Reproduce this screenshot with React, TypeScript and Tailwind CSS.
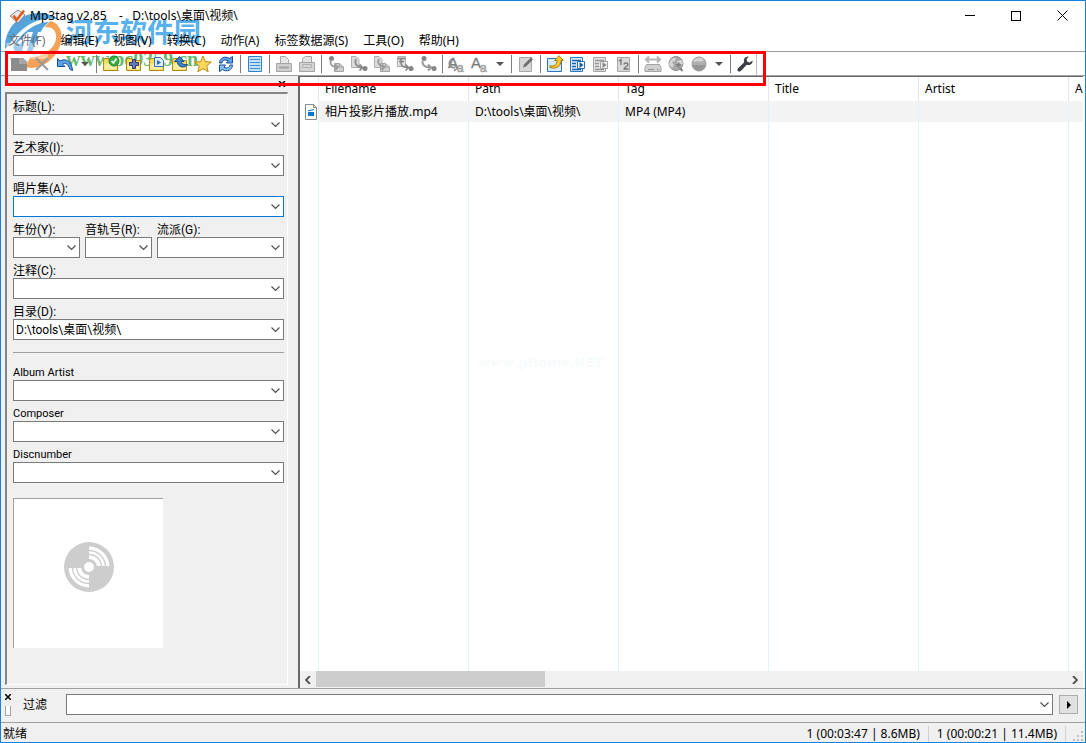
import React from "react";

type IconProps = { children: React.ReactNode };

function Glyph({ children }: IconProps) {
  return (
    <svg viewBox="0 0 18 18" className="h-[18px] w-[18px] shrink-0 overflow-visible" fill="none" aria-hidden="true">
      {children}
    </svg>
  );
}

function FolderBase() {
  return (
    <>
      <path d="M1.5 5.5V15.5H15.5V5.5H8L6.5 3.5H2.5Z" fill="#f3d95c" stroke="#b08a14" />
      <path d="M2.5 8.5H14.5V14.5H2.5Z" fill="#fbeea0" />
    </>
  );
}

const TagNote = () => (
  <>
    <path d="M7.500 8.500h5l4 3.500v4.500h-9z" fill="#d0d0d0" stroke="#a3a3a3" />
    <path d="M12.500 8.500v3.500h4" stroke="#a3a3a3" />
  </>
);

const PaperNote = () => <path d="M1.500 1.500h4.500l3 3v8h-7.500z" fill="#dcdcdc" stroke="#adadad" />;

const BigLetters = () => (
  <>
    <text x="0" y="13" fontSize="15" fontFamily="Liberation Sans" fill="#7d7d7d" stroke="#777" strokeWidth="0.3">A</text>
    <text x="9" y="17" fontSize="12" fontFamily="Liberation Sans" fill="#cfcfcf" stroke="#999" strokeWidth="0.6">a</text>
  </>
);

const icons: Record<string, React.ReactNode> = {
  save: (
    <>
      <path d="M1 3H13L17 7V16H1Z" fill="#8c8c8c" />
      <path d="M9 3h4l4 4v2H9z" fill="#a6a6a6" />
    </>
  ),
  remove: <path d="M3 3l12 12M15 3L3 15" stroke="#9a9a9a" strokeWidth="2" />,
  undo: (
    <path d="M1.5 3.5V11.5H9L6.5 9C9 7.5 12 8.5 14 14.5L16.5 15.5C16 7 10 2.5 4 6Z" fill="#5aa3e6" stroke="#174f9c" />
  ),
  folderCheck: (
    <>
      <FolderBase />
      <circle cx="12" cy="6" r="5" fill="#36b044" stroke="#1b7f2b" />
      <path d="M9.5 6l2 2 3-4.500" stroke="#fff" strokeWidth="1.6" />
    </>
  ),
  folderAdd: (
    <>
      <FolderBase />
      <path d="M7.500 4.500h3v3h3v3h-3v3h-3v-3h-3v-3h3z" fill="#6b78b8" stroke="#2c3672" />
    </>
  ),
  folderPlay: (
    <>
      <FolderBase />
      <path d="M6.500 2.500h6l3 3v6h-9z" fill="#dcecff" stroke="#3674b8" />
      <path d="M9 5v5l4-2.500z" fill="#256ab3" />
    </>
  ),
  folderUp: (
    <>
      <FolderBase />
      <path d="M3.500 6.500L8.500 1.500l4.500 5h-2.500c0 2.500 2 3.500 6 3-1.500 3.500-10 4-10-3z" fill="#3c82cc" stroke="#174a8c" />
    </>
  ),
  star: <path d="M9 1l2.300 5.600 6 .4-4.600 3.900 1.500 5.900L9 13.600 3.800 16.800l1.500-5.900L.7 7l6-.4z" fill="#fbd75b" stroke="#bd8c12" />,
  refresh: (
    <>
      <path d="M2.500 8C2.500 3 8 .500 12.500 3.500L15.500 1.500V8H9.500L11 5.800C8.500 4.200 5.500 5 5 8Z" fill="#5da2e3" stroke="#174f9c" />
      <path d="M15.500 10C15.500 15 10 17.500 5.500 14.500L2.500 16.500V10H8.500L7 12.200C9.500 13.800 12.500 13 13 10Z" fill="#8cc2f2" stroke="#174f9c" />
    </>
  ),
  list: (
    <>
      <path d="M2.500 1.500h13v15h-13z" fill="#c4e2fc" stroke="#2f7fca" />
      <path d="M4 4.500h10M4 7.500h10M4 10.500h10M4 13.500h10" stroke="#3c8bd6" />
    </>
  ),
  printA: (
    <>
      <path d="M5.500 9V1.500h5l3 3V9" fill="#e7e7e7" stroke="#a8a8a8" />
      <path d="M1.500 8.500h15v8h-15z" fill="#cfcfcf" stroke="#a4a4a4" />
      <path d="M4 12.500h10" stroke="#a3a3a3" strokeWidth="2" />
    </>
  ),
  printB: (
    <>
      <path d="M4.500 9V3.500l3-2h6V9" fill="#e3e3e3" stroke="#a4a4a4" />
      <path d="M1.500 7.500h15v9h-15z" fill="#d4d4d4" stroke="#a4a4a4" />
      <path d="M4.500 9.500h9v3h-9z" stroke="#b0b0b0" />
    </>
  ),
  fileToTag: (
    <>
      <TagNote />
      <circle cx="4.500" cy="3.500" r="2.500" fill="#858585" />
      <path d="M3.500 6c-.5 4 2 6 7 6M8 9.500l3 2.500-3 3" stroke="#9a9a9a" strokeWidth="1.800" />
    </>
  ),
  tagToFile: (
    <>
      <PaperNote />
      <path d="M6 4c-2 5 1 8 6 8.500M9.500 9.500l3 3-3 3" stroke="#8c8c8c" strokeWidth="1.800" />
      <circle cx="15" cy="13.500" r="2.500" fill="#858585" />
    </>
  ),
  tagToTag: (
    <>
      <PaperNote />
      <TagNote />
      <path d="M6 4c-2 4 0 7 5 8M8.500 9.500l3 2.500-3 3" stroke="#9a9a9a" strokeWidth="1.800" />
    </>
  ),
  textToFile: (
    <>
      <path d="M1.500 1.500h8v10h-8z" fill="#dedede" stroke="#b0b0b0" />
      <path d="M2 3.500h7M3 6.500h5M5 3v5c0 3 3 4.500 7 4.500M9.500 9.500l3 3-3 3" stroke="#828282" strokeWidth="1.500" />
      <circle cx="15" cy="13.500" r="2.500" fill="#858585" />
    </>
  ),
  fileToFile: (
    <>
      <circle cx="5" cy="3.500" r="2.500" fill="#858585" />
      <path d="M3.500 6c-.5 4 2 6.500 8 6.500M9 9.500l3 3-3 3" stroke="#9c9c9c" strokeWidth="2.200" />
      <circle cx="15" cy="13.500" r="2.500" fill="#858585" />
    </>
  ),
  actionsQuick: (
    <>
      <BigLetters />
      <path d="M4 4c-4 3-4 8 3 9M6 10l3.500 3L6 16" stroke="#8c8c8c" strokeWidth="1.600" />
    </>
  ),
  actions: <BigLetters />,
  edit: (
    <>
      <path d="M2.500 2.500h12v14h-12z" fill="#d6d6d6" stroke="#a8a8a8" />
      <path d="M6 12.500l1-3L14 2.500l2 2-7 7z" fill="#6f6f6f" />
    </>
  ),
  export: (
    <>
      <path d="M1.500 3.500h14v13h-14z" fill="#d6eaff" stroke="#2f74b8" />
      <path d="M4 10.500c4 1.500 7-.5 7-5H8.500L13 .700 17.300 5.500H15c0 6-5 9-11 7z" fill="#fac92e" stroke="#a97b0c" />
    </>
  ),
  playlist: (
    <>
      <path d="M1.500 2.500h12v14h-12z" fill="#d9edff" stroke="#2b78c4" />
      <path d="M3 5.500h9M3 8.500h4M3 11.500h4M3 14.500h9" stroke="#2164aa" strokeWidth="1.500" />
      <path d="M8.500 6.500h7v7h-7z" fill="#f3faff" stroke="#2b6fb5" />
      <path d="M10.500 7v6l4-3z" fill="#1d5ca3" />
    </>
  ),
  playlistGray: (
    <>
      <path d="M1.500 2.500h12v14h-12z" fill="#e2e2e2" stroke="#a8a8a8" />
      <path d="M3 5.500h9M3 8.500h4M3 11.500h4M3 14.500h9" stroke="#969696" strokeWidth="1.500" />
      <path d="M8.500 6.500h7v7h-7z" fill="#efefef" stroke="#a0a0a0" />
      <path d="M10.500 7v6l4-3z" fill="#848484" />
    </>
  ),
  number: (
    <>
      <path d="M2.500 2.500h12v14h-12z" fill="#d9d9d9" stroke="#a8a8a8" />
      <path d="M4 6l2-1.500V10M9 9.500c0-2 4-2 4 0 0 1.500-4 2.500-4 4.500h4.500" stroke="#757575" strokeWidth="1.300" />
    </>
  ),
  device: (
    <>
      <path d="M2 4.500h14M5 1.500l-3 3 3 3M13 1.500l3 3-3 3" stroke="#b5b5b5" strokeWidth="2" />
      <path d="M2.500 9.500h13l1.500 3v4H1v-4z" fill="#d0d0d0" stroke="#a3a3a3" />
      <path d="M4 14.500h6M13 14.500h1.500" stroke="#8f8f8f" />
    </>
  ),
  globeSearch: (
    <>
      <circle cx="9" cy="8.500" r="7" fill="#a8a8a8" stroke="#909090" />
      <path d="M3 6c2-3 5-4 6-3l-1 3-3 1 2 3-2 3-3-3zM10 6l5-1 1 3-3 4-3-2z" fill="#d6d6d6" />
      <path d="M9 10h5M11.500 7.500v5M13 13l2.500 3" stroke="#808080" strokeWidth="2" />
    </>
  ),
  globe: (
    <>
      <circle cx="9" cy="9" r="7" fill="#b0b0b0" stroke="#999" />
      <path d="M3 6c3-4 9-4 11-1l-3 2-4-1-2 1z" fill="#d4d4d4" />
      <path d="M3 10h12c0 3-3 5.500-6 5.500S3 13 3 10z" fill="#969696" />
    </>
  ),
  wrench: (
    <path d="M16.500 5.500C17 9 13.500 11 10.800 9.700L4.500 16.200C2.500 17.500.500 15.500 1.800 13.500L8.200 7.200C7 4 9.500 1 12.800 1.500L10.500 4.200 11.300 6.700 13.800 7.500Z" fill="#3b3f45" />
  ),
};

type ToolItem = { kind: "button"; icon: string; label: string } | { kind: "arrow"; label: string } | { kind: "sep" };

const b = (icon: string, label: string): ToolItem => ({ kind: "button", icon, label });
const sep: ToolItem = { kind: "sep" };

const toolbar: ToolItem[] = [
  b("save", "Save tag"), b("remove", "Remove tag"), b("undo", "Undo"), { kind: "arrow", label: "Undo history" }, sep,
  b("folderCheck", "Change directory"), b("folderAdd", "Add directory"), b("folderPlay", "Load playlist"),
  b("folderUp", "Parent directory"), b("star", "Favorite directory"), b("refresh", "Refresh"), sep,
  b("list", "Select all files"), sep,
  b("printA", "Copy tag"), b("printB", "Paste tag"), sep,
  b("fileToTag", "Filename to tag"), b("tagToFile", "Tag to filename"), b("tagToTag", "Tag to tag"),
  b("textToFile", "Text file to tag"), b("fileToFile", "Filename to filename"), sep,
  b("actionsQuick", "Quick actions"), b("actions", "Actions"), { kind: "arrow", label: "Choose action" }, sep,
  b("edit", "Extended tags"), sep,
  b("export", "Export"), b("playlist", "Playlist of all files"), b("playlistGray", "Playlist of selection"),
  b("number", "Auto-numbering wizard"), sep,
  b("device", "Device"), b("globeSearch", "Search web"), b("globe", "Web sources"),
  { kind: "arrow", label: "Choose web source" }, sep,
  b("wrench", "Options"),
];

function Toolbar() {
  return (
    <div role="toolbar" className="flex h-6 items-center border-t border-[#a0a0a0] pl-[6px]">
      {toolbar.map((item, i) => {
        if (item.kind === "sep") {
          return (
            <span key={i} className="flex h-[18px] w-[6px] shrink-0 justify-center">
              <span className="w-px bg-[#7d7d7d]" />
            </span>
          );
        }
        if (item.kind === "arrow") {
          return (
            <button key={i} aria-label={item.label} className="flex h-5 w-[17px] shrink-0 items-center justify-center">
              <svg viewBox="0 0 8 4" className="h-1 w-2" aria-hidden="true">
                <path d="M0 0h8L4 4z" fill="#555" />
              </svg>
            </button>
          );
        }
        return (
          <button key={i} aria-label={item.label} className="flex h-5 w-[23px] shrink-0 items-center justify-center">
            <Glyph>{icons[item.icon]}</Glyph>
          </button>
        );
      })}
      <span className="h-[22px] w-px bg-[#c0c0c0]" />
    </div>
  );
}

function Chevron() {
  return (
    <svg viewBox="0 0 9 6" className="pointer-events-none absolute right-1 top-2 h-[6px] w-[9px]" fill="none" aria-hidden="true">
      <path d="M.5.500l4 4 4-4" stroke="#505050" strokeWidth="1.200" />
    </svg>
  );
}

type FieldProps = { id: string; label: string; value?: string; active?: boolean };

function Field({ id, label, value = "", active = false }: FieldProps) {
  return (
    <div className="min-w-0">
      <label htmlFor={id} className="block h-5 whitespace-nowrap pt-[3px] leading-5">
        {label}
      </label>
      <div className="relative">
        <select
          id={id}
          defaultValue={value}
          className={
            "block h-[21px] w-full appearance-none border bg-white pl-[2px] pr-4 leading-4 outline-none " +
            (active ? "border-[#0078d7]" : "border-[#7a7a7a]")
          }
        >
          <option>{value}</option>
        </select>
        <Chevron />
      </div>
    </div>
  );
}

function Disc() {
  return (
    <svg viewBox="0 0 50 50" className="h-[50px] w-[50px]" fill="none" aria-hidden="true">
      <circle cx="25" cy="25" r="25" fill="#cdcdcd" />
      <path d="M25 4.500A20.500 20.500 0 0 1 45.500 24H32A7 7 0 0 0 25 18Z" fill="#fff" />
      <path d="M25 45.500A20.500 20.500 0 0 1 4.500 26H18A7 7 0 0 0 25 32Z" fill="#fff" />
      <path d="M25 8.500A16.500 16.500 0 0 1 41.500 24M25 12.500A12.500 12.500 0 0 1 37.500 24M25 41.500A16.500 16.500 0 0 1 8.500 26M25 37.500A12.500 12.500 0 0 1 12.500 26" stroke="#cdcdcd" strokeWidth="1.300" />
      <circle cx="25" cy="25" r="6.500" fill="#fff" stroke="#cdcdcd" strokeWidth="3" />
    </svg>
  );
}

function TagPanel() {
  return (
    <aside className="flex w-[297px] shrink-0 flex-col bg-[#f0f0f0] pb-[3px] pl-1 pr-[10px]">
      <div className="flex h-4 items-center gap-1 pl-1">
        <span className="h-[3px] flex-1 border border-[#c8c8c8] bg-white" />
        <button aria-label="Close panel" className="flex h-3 w-3 items-center justify-center">
          <svg viewBox="0 0 8 6" className="h-[6px] w-2" aria-hidden="true">
            <path d="M1 0l6 6M7 0L1 6" stroke="#000" strokeWidth="1.500" />
          </svg>
        </button>
      </div>
      <div className="flex-1 border-2 border-b border-r border-b-white border-l-[#858585] border-r-white border-t-[#858585] pl-[6px] pr-[3px] font-[Roboto,'Noto_Sans_CJK_SC',sans-serif] text-xs">
        <Field id="title" label="标题(L):" />
        <Field id="artist" label="艺术家(I):" />
        <Field id="album" label="唱片集(A):" active />
        <div className="grid grid-cols-[67px_67px_1fr] gap-[5px]">
          <Field id="year" label="年份(Y):" />
          <Field id="track" label="音轨号(R):" />
          <Field id="genre" label="流派(G):" />
        </div>
        <Field id="comment" label="注释(C):" />
        <Field id="directory" label="目录(D):" value="D:\tools\桌面\视频\" />
        <hr className="mb-[7px] mt-3 border-[#a0a0a0]" />
        <div className="text-[11px]">
          <Field id="albumartist" label="Album Artist" />
          <Field id="composer" label="Composer" />
          <Field id="discnumber" label="Discnumber" />
        </div>
        <div className="mt-[15px] flex h-[150px] w-[150px] items-center justify-center border-l border-t border-[#a0a0a0] bg-white pb-[14px]">
          <Disc />
        </div>
      </div>
    </aside>
  );
}

const columns = ["", "Filename", "Path", "Tag", "Title", "Artist", "A"];
const row = ["", "相片投影片播放.mp4", "D:\\tools\\桌面\\视频\\", "MP4 (MP4)", "", "", ""];

function FileIcon() {
  return (
    <svg viewBox="0 0 12 16" className="ml-[5px] h-4 w-3" fill="none" aria-hidden="true">
      <path d="M.5.500h8l3 3v12H.500z" fill="#fff" stroke="#8b8b8b" />
      <path d="M8.500.500v3h3" stroke="#8b8b8b" />
      <path d="M3 8h6v4H3z" fill="#0078d7" />
      <path d="M3 7l6-1.500" stroke="#0078d7" strokeWidth="1.200" />
    </svg>
  );
}

function FileList() {
  return (
    <section className="mr-[2px] flex min-w-0 flex-1 flex-col border-l-2 border-t border-[#696969] bg-white">
      <div className="relative min-h-0 flex-1 overflow-hidden">
        <table className="h-full w-full table-fixed border-separate border-spacing-0 text-left">
          <colgroup>
            <col className="w-[19px]" />
            <col className="w-[150px]" />
            <col className="w-[150px]" />
            <col className="w-[150px]" />
            <col className="w-[150px]" />
            <col className="w-[150px]" />
            <col />
          </colgroup>
          <thead>
            <tr className="h-6">
              {columns.map((c, i) => (
                <th key={i} scope="col" className="overflow-hidden whitespace-nowrap border-r border-[#e5e5e5] p-0 pl-[6px] font-normal leading-4 last:border-r-0">
                  {c}
                </th>
              ))}
            </tr>
          </thead>
          <tbody>
            <tr className="h-[21px]">
              {row.map((c, i) => (
                <td key={i} className={"overflow-hidden whitespace-nowrap border-r border-[#e3f0ff] p-0 leading-4 last:border-r-0 " + (i === 0 ? "" : "bg-[#f3f3f3] pl-[6px]")}>
                  {i === 0 ? <FileIcon /> : c}
                </td>
              ))}
            </tr>
            <tr aria-hidden="true">
              {row.map((_, i) => (
                <td key={i} className="border-r border-[#e3f0ff] p-0 last:border-r-0" />
              ))}
            </tr>
          </tbody>
        </table>
        <p className="absolute left-[178px] top-[277px] font-['DejaVu_Sans',sans-serif] text-[13px] font-bold text-[#f6fcfb]">www.pHome.NET</p>
      </div>
      <div className="flex h-[17px] items-center bg-[#f0f0f0]">
        <button aria-label="Scroll left" className="flex h-full w-4 items-center justify-center">
          <svg viewBox="0 0 6 8" className="h-2 w-[6px]" fill="none" aria-hidden="true">
            <path d="M5 0L1 4l4 4" stroke="#505050" strokeWidth="1.800" />
          </svg>
        </button>
        <div className="h-full flex-1">
          <div className="h-4 w-[30.5%] bg-[#cdcdcd]" />
        </div>
        <button aria-label="Scroll right" className="flex h-full w-4 items-center justify-center">
          <svg viewBox="0 0 6 8" className="h-2 w-[6px]" fill="none" aria-hidden="true">
            <path d="M1 0l4 4-4 4" stroke="#505050" strokeWidth="1.800" />
          </svg>
        </button>
      </div>
    </section>
  );
}

function FilterBar() {
  return (
    <form className="flex h-[34px] items-center border-t border-[#a0a0a0] bg-[#f0f0f0] pb-[2px] pr-[7px]">
      <div className="flex w-5 flex-col gap-[6px] pl-1">
        <button type="button" aria-label="Close filter" className="h-[6px] w-[6px]">
          <svg viewBox="0 0 6 6" className="h-[6px] w-[6px]" aria-hidden="true">
            <path d="M0 0l6 6M6 0L0 6" stroke="#000" strokeWidth="1.500" />
          </svg>
        </button>
        <span className="h-[10px] w-[6px] border-x border-b border-[#a0a0a0] bg-white" />
      </div>
      <label htmlFor="filter" className="w-[45px] pl-[2px]">
        过滤
      </label>
      <div className="relative flex-1">
        <select id="filter" className="block h-[21px] w-full appearance-none border border-[#7a7a7a] bg-white px-1 outline-none">
          <option></option>
        </select>
        <Chevron />
      </div>
      <button type="button" aria-label="Apply filter" className="ml-[6px] flex h-[19px] w-[19px] items-center justify-center border border-[#adadad] bg-[#e1e1e1]">
        <svg viewBox="0 0 4 8" className="h-2 w-1" aria-hidden="true">
          <path d="M0 0l4 4-4 4z" fill="#000" />
        </svg>
      </button>
    </form>
  );
}

function StatusBar() {
  return (
    <footer className="flex h-5 items-center border-t border-[#a0a0a0] bg-[#f0f0f0] pl-[2px] pt-[2px] leading-4">
      <span className="flex-1">就绪</span>
      <span className="border-r border-[#d0d0d0] pr-2">1 (00:03:47 | 8.6MB)</span>
      <span className="border-r border-[#d0d0d0] pl-2 pr-2">1 (00:00:21 | 11.4MB)</span>
      <svg viewBox="0 0 19 16" className="h-4 w-[19px]" fill="#bfbfbf" aria-hidden="true">
        <path d="M15 5h2v2h-2zM15 9h2v2h-2zM15 13h2v2h-2zM11 9h2v2h-2zM11 13h2v2h-2zM7 13h2v2H7z" />
      </svg>
    </footer>
  );
}

function TitleBar() {
  return (
    <header className="flex h-[29px] items-center pl-2">
      <svg viewBox="0 0 17 16" className="h-4 w-[17px]" fill="none" aria-hidden="true">
        <path d="M1 8l8-6 7 5-7 8z" fill="#e8e8ee" stroke="#84848c" />
        <path d="M4.500 7.500l3 4.500L15 2.500" stroke="#e35a17" strokeWidth="2.500" />
      </svg>
      <h1 className="flex-1 whitespace-pre pl-1">Mp3tag v2.85    -   D:\tools\桌面\视频\</h1>
      <div className="flex h-full">
        <button aria-label="Minimize" className="flex w-[46px] items-center justify-center">
          <span className="h-px w-[10px] bg-black" />
        </button>
        <button aria-label="Maximize" className="flex w-[46px] items-center justify-center">
          <span className="h-[10px] w-[10px] border border-black" />
        </button>
        <button aria-label="Close" className="flex w-[46px] items-center justify-center">
          <svg viewBox="0 0 11 11" className="h-[11px] w-[11px]" aria-hidden="true">
            <path d="M.5.500l10 10M10.500.500l-10 10" stroke="#000" />
          </svg>
        </button>
      </div>
    </header>
  );
}

const menus = ["文件(F)", "编辑(E)", "视图(V)", "转换(C)", "动作(A)", "标签数据源(S)", "工具(O)", "帮助(H)"];

function MenuBar() {
  return (
    <nav className="flex h-[21px] items-center gap-[15px] pl-[7px]">
      {menus.map((m) => (
        <button key={m} className="whitespace-nowrap leading-4 first:text-[#6f6f78]">
          {m}
        </button>
      ))}
    </nav>
  );
}

function SiteBadge() {
  return (
    <div className="pointer-events-none absolute left-1 top-3 -z-10 flex h-[58px] items-start">
      <svg viewBox="0 0 58 58" className="h-[58px] w-[58px]" aria-hidden="true">
        <g opacity="0.75">
          <path d="M0 36C-1 16 14 0 34 0c8 0 14 2 20 7C44 3 28 8 18 18 10 25 4 32 0 36z" fill="#1c86cf" />
          <path d="M8 34C16 20 30 9 44 9c-5 4-8 8-9 12L28 39H10z" fill="#1c86cf" />
          <path d="M46 8c9 3 12 12 10 21-3 14-16 26-30 26l-5-1 4-10c12 0 24-7 26-18 1-8-3-12-11-12 2-3 4-5 6-6z" fill="#ef8420" />
          <path d="M4 43c6 5 13 6 21 5l-3 8C13 56 6 51 4 43z" fill="#ef8420" opacity="0.5" />
        </g>
        <path d="M0 40C8 22 24 6 44 6 28 10 13 22 5 37z" fill="#fff" opacity="0.9" />
        <path d="M12 30l11-11h5l-6 19h-5l3-11-5 4zM33 19h9c8 1 6 13-3 14h-5l-2 6h-5l4-11h7c4-1 4-5 1-5h-7z" fill="#fff" />
        <path d="M1 30h42v16H3z" fill="#fff" opacity="0.45" />
      </svg>
      <div className="pl-[3px]">
        <p className="font-['Noto_Sans_CJK_SC',sans-serif] text-[27px] font-bold leading-9 text-[#2196e8]/75">河东软件园</p>
        <p className="font-['Liberation_Serif',serif] text-xl font-bold leading-5 text-[#35a23c]/75">www.pc0359.cn</p>
      </div>
    </div>
  );
}

export default function App() {
  return (
    <div className="relative isolate flex h-screen flex-col overflow-hidden border border-[#1a80d4] bg-white font-['Noto_Sans','Noto_Sans_CJK_SC',sans-serif] text-xs text-black">
      <TitleBar />
      <MenuBar />
      <Toolbar />
      <main className="flex min-h-0 flex-1 border-t border-[#a0a0a0]">
        <TagPanel />
        <FileList />
      </main>
      <FilterBar />
      <StatusBar />
      <SiteBadge />
      <div className="pointer-events-none absolute left-1 top-[50px] h-[35px] w-[761px] border-[3px] border-[#fb0007]" />
    </div>
  );
}
